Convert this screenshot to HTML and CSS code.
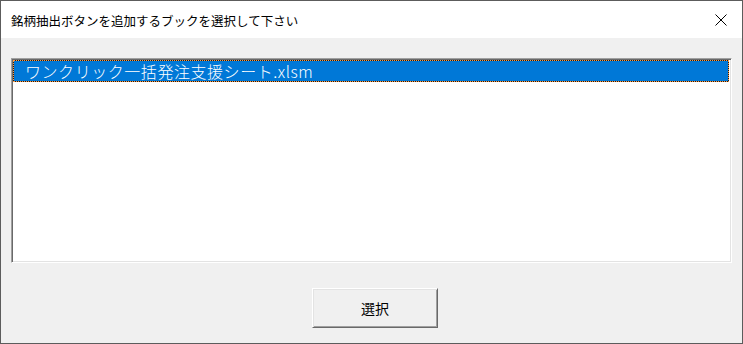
FILE: index.html
```html
<!DOCTYPE html>
<html lang="ja">
<head>
<meta charset="utf-8">
<title>銘柄抽出ボタン</title>
<link rel="stylesheet" href="styles.css">
</head>
<body>
<div class="window">
  <div class="titlebar">
    <span class="title">銘柄抽出ボタンを追加するブックを選択して下さい</span>
    <svg class="close" width="12" height="12" viewBox="0 0 12 12" aria-hidden="true">
      <path d="M0.5 0.5 L11.5 11.5 M11.5 0.5 L0.5 11.5" stroke="#000" stroke-width="1" fill="none"/>
    </svg>
  </div>
  <div class="body">
    <div class="listbox">
      <div class="item selected"><span>ワンクリック一括発注支援シート.xlsm</span></div>
    </div>
    <div class="actions">
      <button class="btn">選択</button>
    </div>
  </div>
</div>
</body>
</html>
```
FILE: styles.css
```css
* { box-sizing: border-box; }
html, body { margin: 0; padding: 0; background: #f0f0f0; }
body {
  font-family: "Noto Sans CJK JP", "Noto Sans", sans-serif;
  color: #000;
}
.window {
  width: 743px;
  height: 344px;
  border: 1px solid #5c5c5c;
  background: #f0f0f0;
  display: flex;
  flex-direction: column;
}
.titlebar {
  height: 37px;
  background: #fff;
  display: flex;
  align-items: center;
  justify-content: space-between;
  padding: 2px 15px 0 10px;
}
.title {
  font-size: 12.5px;
  line-height: 16px;
  letter-spacing: 0;
}
.close { display: block; margin-top: -1px; }
.body {
  flex: 1;
  padding: 20px 10px 0 10px;
  display: flex;
  flex-direction: column;
}
.listbox {
  height: 205px;
  background: #fff;
  border-top: 1px solid #a0a0a0;
  border-left: 1px solid #a0a0a0;
  border-right: 1px solid #fff;
  border-bottom: 1px solid #fff;
  box-shadow: inset 1px 1px 0 #696969, inset -1px -1px 0 #e3e3e3;
  padding: 1px 2px 1px 1px;
}
.item {
  height: 22px;
  font-size: 16px;
  font-weight: 300;
  line-height: 20px;
  letter-spacing: 0.55px;
  padding-left: 11px;
  white-space: nowrap;
}
.item.selected {
  position: relative;
  background: #0078d7;
  color: #fff;
  border: 1px solid #1c1c1c;
}
.item.selected::after {
  content: "";
  position: absolute;
  inset: -1px;
  border: 1px dotted #ff9a40;
  pointer-events: none;
}
.actions {
  padding: 25px 0 0 301px;
}
.btn {
  width: 126px;
  height: 40px;
  background: #f0f0f0;
  border-top: 1px solid #fff;
  border-left: 1px solid #fff;
  border-right: 1px solid #696969;
  border-bottom: 1px solid #696969;
  box-shadow: inset 1px 1px 0 #e3e3e3, inset -1px -1px 0 #a0a0a0;
  font-family: "Noto Sans CJK JP", sans-serif;
  font-size: 14px;
  line-height: 16px;
  color: #000;
  padding: 0;
}
```
